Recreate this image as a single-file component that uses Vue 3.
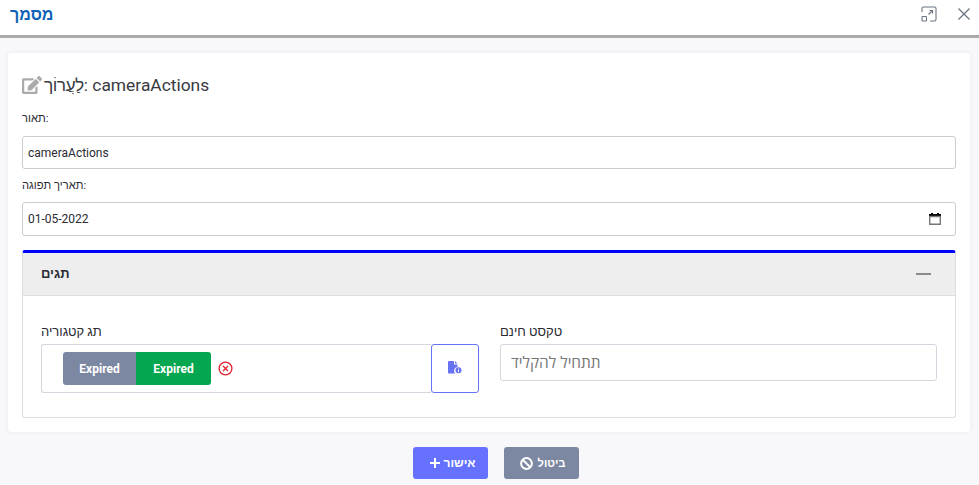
<template>
  <div class="modal">
    <header class="head">
      <h1 class="brand">מסמך</h1>
      <div class="head-icons">
        <svg class="ic-expand" width="16" height="16" viewBox="0 0 16 16" fill="none" stroke="#6b7480" stroke-width="1.1">
          <path d="M1 6V2.500A1.500 1.500 0 0 1 2.500 1H13.500A1.500 1.500 0 0 1 15 2.500V13.500A1.500 1.500 0 0 1 13.500 15H9" />
          <rect x="1" y="10.500" width="4.500" height="4.500" rx="0.800" />
          <path d="M7.500 8.500L11.500 4.500M8.500 4.500H11.500V7.500" />
        </svg>
        <svg width="14" height="14" viewBox="0 0 14 14" fill="none" stroke="#6b7480" stroke-width="1.300">
          <path d="M1.500 1.500L12.500 12.500M12.500 1.500L1.500 12.500" />
        </svg>
      </div>
    </header>
    <main class="body">
      <section class="card">
        <h2 class="title">
          <svg width="20" height="18" viewBox="0 0 576 512">
            <path fill="#aaa" d="M402.600 83.200l90.200 90.200c3.800 3.800 3.800 10 0 13.800L274.400 405.600l-92.800 10.300c-12.400 1.400-22.900-9.100-21.500-21.500l10.300-92.800L388.800 83.200c3.800-3.800 10-3.800 13.800 0zm162-22.900l-48.800-48.800c-15.200-15.200-39.900-15.200-55.200 0l-35.400 35.400c-3.800 3.800-3.800 10 0 13.800l90.200 90.200c3.800 3.800 10 3.800 13.800 0l35.400-35.400c15.200-15.300 15.200-40 0-55.200zM384 346.200V448H64V128h229.800c3.200 0 6.200-1.300 8.500-3.500l40-40c7.600-7.600 2.200-20.500-8.500-20.500H48C21.500 64 0 85.500 0 112v352c0 26.500 21.500 48 48 48h352c26.500 0 48-21.500 48-48V306.200c0-10.700-12.900-16-20.500-8.500l-40 40c-2.200 2.300-3.500 5.300-3.500 8.500z" />
          </svg>
          <span><span class="he">לַעֲרוֹך</span>: cameraActions</span>
        </h2>
        <label class="lbl">תאור:</label>
        <div class="field">cameraActions</div>
        <label class="lbl lbl-date">תאריך תפוגה:</label>
        <div class="field field-date">
          <span>01-05-2022</span>
          <svg width="12" height="12" viewBox="0 0 12 12">
            <path fill="#000" d="M2 0h2v1h4V0h2v1h2v3H0V1h2z" />
            <path fill="none" stroke="#777" stroke-width="1.400" d="M.7 3.500h10.600v7.800H.7z" />
          </svg>
        </div>
        <div class="acc">
          <div class="acc-head">
            <strong class="acc-title">תגים</strong>
            <span class="minus"></span>
          </div>
          <div class="acc-body">
            <div class="col-tags">
              <div class="sub-lbl">תג קטגוריה</div>
              <div class="tag-row">
                <div class="tag-box">
                  <span class="tag gray">Expired</span>
                  <span class="tag green">Expired</span>
                  <svg class="rm" width="15" height="15" viewBox="0 0 15 15" fill="none" stroke="#e4202c" stroke-width="1.300">
                    <circle cx="7.500" cy="7.500" r="6.400" />
                    <path d="M5 5l5 5M10 5l-5 5" />
                  </svg>
                </div>
                <button class="file-btn" type="button" aria-label="file">
                  <svg width="14" height="13" viewBox="0 0 14 13">
                    <path fill="#6772f5" d="M1 0h5v3.500h3.500V6a3.600 3.600 0 0 0-2 6.500H1a1 1 0 0 1-1-1V1a1 1 0 0 1 1-1zM7 0l2.500 2.500H7z" />
                    <circle cx="10.500" cy="9.300" r="3" fill="#6772f5" />
                    <path stroke="#fff" stroke-width="1" d="M10.500 8.800v2.200M10.500 7.500v.8" />
                  </svg>
                </button>
              </div>
            </div>
            <div class="col-free">
              <div class="sub-lbl">טקסט חינם</div>
              <input class="free" dir="rtl" placeholder="תתחיל להקליד" />
            </div>
          </div>
        </div>
      </section>
      <footer class="foot">
        <button class="btn primary" type="button">
          <svg width="10" height="10" viewBox="0 0 10 10" stroke="#fff" stroke-width="2"><path d="M5 0v10M0 5h10" /></svg>
          <span>אישור</span>
        </button>
        <button class="btn muted" type="button">
          <svg width="13" height="13" viewBox="0 0 13 13" fill="none" stroke="#fff" stroke-width="2">
            <circle cx="6.500" cy="6.500" r="5.400" />
            <path d="M2.700 2.700l7.600 7.600" />
          </svg>
          <span>ביטול</span>
        </button>
      </footer>
    </main>
  </div>
</template>

<script setup>
</script>

<style scoped>
.modal {
  width: 979px;
  height: 485px;
  overflow: hidden;
  background: #f8f8fb;
  font-family: Roboto, "Liberation Sans", sans-serif;
  color: #2b2b33;
}
.head {
  height: 35px;
  box-sizing: content-box;
  display: flex;
  align-items: center;
  justify-content: space-between;
  padding: 0 8px 0 10px;
  background: #fff;
  border-bottom: 3px solid #aaa;
}
.brand {
  margin: 0 0 6px;
  font-size: 16px;
  font-weight: 700;
  color: #0f62b8;
}
.head-icons {
  display: flex;
  align-items: center;
  gap: 20px;
  margin-bottom: 7px;
}
.body {
  padding: 15px 9px 0 8px;
}
.card {
  height: 379px;
  box-sizing: border-box;
  padding: 22px 14px 14px;
  background: #fff;
  border-radius: 3px;
  box-shadow: 0 0 4px rgba(110, 110, 160, .12);
}
.title {
  display: flex;
  align-items: center;
  gap: 2px;
  margin: 0;
  height: 20px;
  font-size: 17.4px;
  font-weight: 400;
  color: #3a3a42;
}
.he {
  letter-spacing: -.5px;
}
.lbl {
  display: block;
  margin-top: 16px;
  height: 25px;
  font-size: 11.2px;
  line-height: 16px;
}
.lbl-date {
  margin-top: 9px;
  height: 24px;
}
.field {
  height: 33px;
  box-sizing: border-box;
  display: flex;
  align-items: center;
  justify-content: space-between;
  padding: 0 14px 0 5px;
  border: 1px solid #ccc;
  border-radius: 3px;
  font-size: 12px;
}
.field-date {
  height: 34px;
}
.acc {
  margin-top: 14px;
  height: 168px;
  box-sizing: border-box;
  border: 1px solid #ddd;
  border-top: 3px solid #00f;
  border-radius: 3px;
}
.acc-head {
  height: 42px;
  display: flex;
  align-items: center;
  justify-content: space-between;
  padding: 0 24px 0 18px;
  background: #eee;
  border-bottom: 1px solid #ddd;
  font-size: 13px;
}
.acc-title {
  margin-bottom: 2px;
}
.minus {
  width: 15px;
  height: 2px;
  background: #8a8a8a;
}
.acc-body {
  display: flex;
  gap: 21px;
  padding: 27px 18px 0;
}
.col-tags {
  width: 438px;
}
.col-free {
  flex: 1;
}
.sub-lbl {
  height: 21px;
  font-size: 13px;
  line-height: 18px;
}
.tag-row {
  display: flex;
  height: 49px;
}
.tag-box {
  width: 390px;
  box-sizing: border-box;
  display: flex;
  align-items: center;
  padding-left: 21px;
  border: 1px solid #d5d6de;
  border-right: 0;
  border-radius: 3px 0 0 3px;
}
.tag {
  width: 73px;
  height: 33px;
  display: flex;
  align-items: center;
  justify-content: center;
  color: #fff;
  font-size: 12px;
  font-weight: 700;
}
.tag.gray {
  background: #7c88a1;
  border-radius: 3px 0 0 3px;
}
.tag.green {
  width: 75px;
  background: #05a650;
  border-radius: 0 3px 3px 0;
}
.rm {
  margin-left: 7px;
}
.file-btn {
  width: 48px;
  height: 49px;
  padding: 0 0 2px;
  display: flex;
  align-items: center;
  justify-content: center;
  background: #fff;
  border: 1px solid #6674f6;
  border-radius: 3px;
}
.free {
  width: 100%;
  height: 37px;
  box-sizing: border-box;
  padding: 0 10px;
  border: 1px solid #d5d6de;
  border-radius: 3px;
  font: 15.4px "Open Sans", "Liberation Sans", sans-serif;
  text-align: left;
  outline: none;
}
.free::placeholder {
  color: #777;
}
.foot {
  display: flex;
  justify-content: center;
  gap: 16px;
  padding-top: 15px;
  padding-left: 13px;
}
.btn {
  width: 75px;
  height: 32px;
  display: flex;
  align-items: center;
  justify-content: center;
  gap: 4px;
  padding: 0 0 0 4px;
  border: 0;
  border-radius: 3px;
  color: #fff;
  font-family: inherit;
  font-size: 12px;
  font-weight: 700;
}
.primary {
  gap: 3px;
  padding-left: 6px;
  background: #6672ff;
}
.muted {
  font-size: 11.2px;
  background: #7c88a1;
}
</style>
